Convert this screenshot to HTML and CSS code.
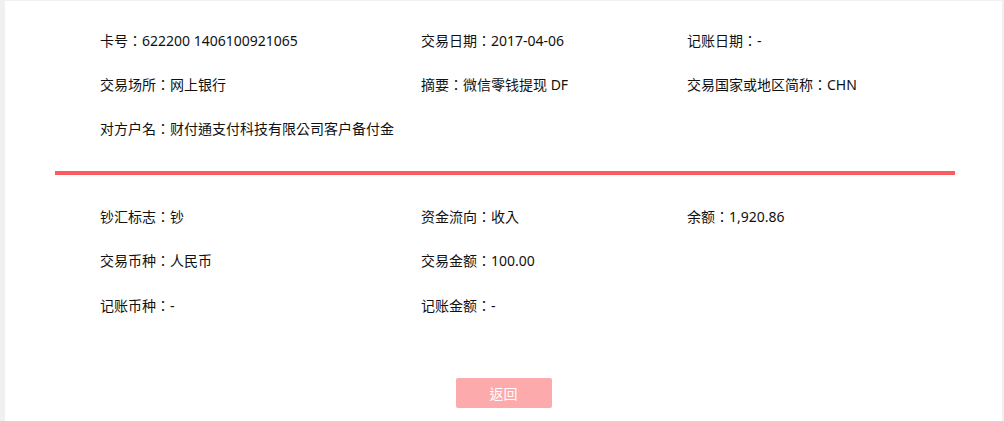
FILE: index.html
```html
<!DOCTYPE html>
<html>
<head>
<meta charset="utf-8">
<title>交易详情</title>
<link rel="stylesheet" href="styles.css">
</head>
<body>
<div class="panel">
  <div class="info-grid">
    <div class="item">卡号：622200 1406100921065</div>
    <div class="item">交易日期：2017-04-06</div>
    <div class="item">记账日期：-</div>
    <div class="item">交易场所：网上银行</div>
    <div class="item">摘要：微信零钱提现 DF</div>
    <div class="item">交易国家或地区简称：CHN</div>
    <div class="item">对方户名：财付通支付科技有限公司客户备付金</div>
  </div>
  <div class="divider"></div>
  <div class="info-grid second">
    <div class="item">钞汇标志：钞</div>
    <div class="item">资金流向：收入</div>
    <div class="item">余额：1,920.86</div>
    <div class="item">交易币种：人民币</div>
    <div class="item">交易金额：100.00</div>
    <div class="item"></div>
    <div class="item">记账币种：-</div>
    <div class="item">记账金额：-</div>
  </div>
  <div class="actions">
    <button class="btn-back">返回</button>
  </div>
</div>
</body>
</html>
```
FILE: styles.css
```css
html, body {
  margin: 0;
  padding: 0;
  background: #f0f0f0;
  height: 100%;
}
body {
  font-family: "Noto Sans", "Noto Sans CJK TC", "Noto Sans CJK SC", sans-serif;
  font-size: 14px;
  color: #111;
}
.panel {
  background: #fff;
  margin: 1px 2px 0 5px;
  padding-top: 18px;
  min-height: 420px;
  box-sizing: border-box;
}
.info-grid {
  display: grid;
  grid-template-columns: 321px 266px 1fr;
  margin: 0 50px;
  padding-left: 45px;
}
.item {
  height: 44px;
  line-height: 44px;
  white-space: nowrap;
}
.divider {
  height: 4px;
  background: #fd5b5e;
  margin: 20px 47px 20px 50px;
}
.second .item:nth-child(n+4) {
  height: 44.5px;
}
.actions {
  display: flex;
  justify-content: center;
  padding-top: 50px;
}
.btn-back {
  width: 96px;
  height: 30px;
  border: none;
  border-radius: 2px;
  background: #fcaaab;
  color: #fff;
  font-family: inherit;
  font-size: 14px;
  padding: 0;
}
```
